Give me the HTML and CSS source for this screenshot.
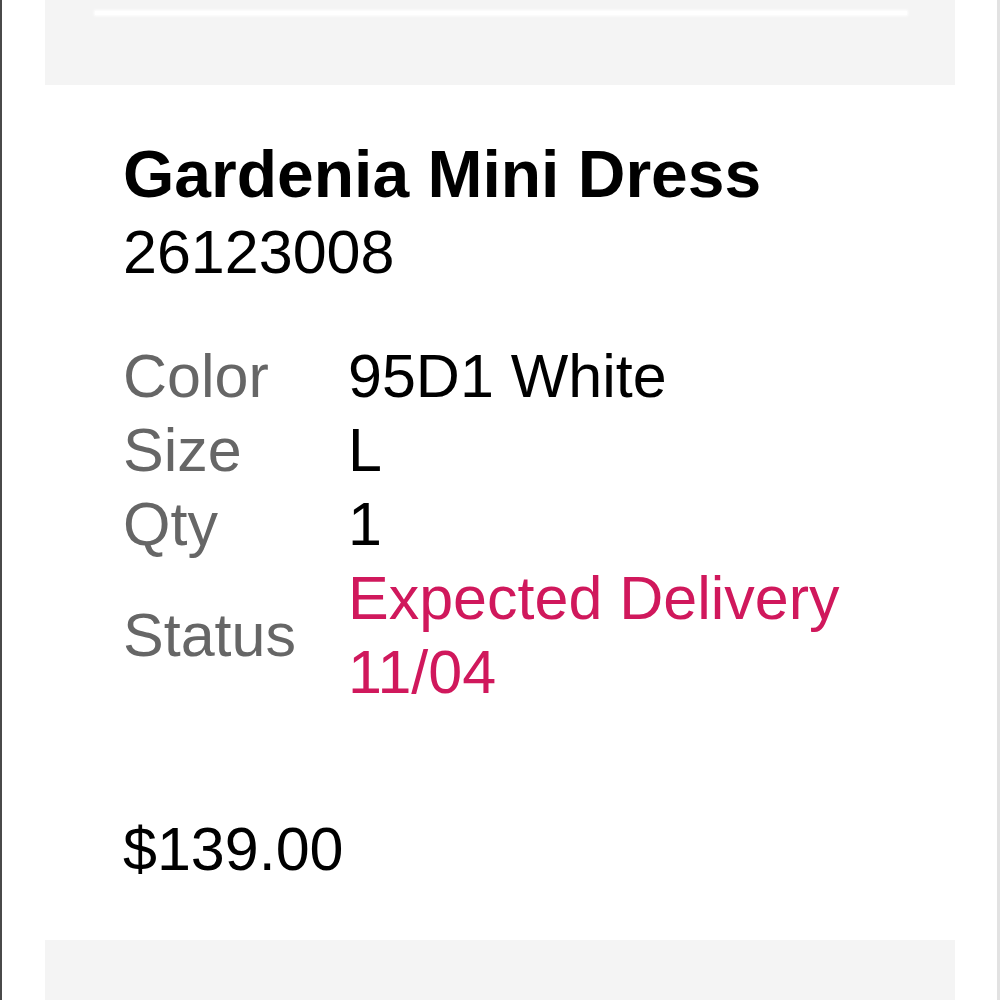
FILE: index.html
```html
<!DOCTYPE html>
<html lang="en">
<head>
<meta charset="utf-8">
<title>Gardenia Mini Dress</title>
<link rel="stylesheet" href="styles.css">
</head>
<body>
<div class="screen">
  <div class="panel panel-top">
    <div class="divider"></div>
  </div>
  <div class="item">
    <h1 class="item-name">Gardenia Mini Dress</h1>
    <div class="item-sku">26123008</div>
    <dl class="details">
      <dt class="label">Color</dt>
      <dd class="value">95D1 White</dd>
      <dt class="label">Size</dt>
      <dd class="value">L</dd>
      <dt class="label">Qty</dt>
      <dd class="value">1</dd>
      <dt class="label">Status</dt>
      <dd class="value status">Expected Delivery 11/04</dd>
    </dl>
    <div class="price">$139.00</div>
  </div>
  <div class="panel panel-bottom"></div>
</div>
</body>
</html>
```

FILE: styles.css
```css
html, body {
  margin: 0;
  padding: 0;
  background: #ffffff;
}

body {
  font-family: "Liberation Sans", Arial, Helvetica, sans-serif;
  color: #000000;
}

.screen {
  box-sizing: border-box;
  width: 1000px;
  height: 1000px;
  overflow: hidden;
  border-left: 2px solid #4a4a4a;
  border-right: 3px solid #e2e2e2;
  display: flex;
  flex-direction: column;
}

.panel {
  margin-left: 43px;
  width: 910px;
  background: #f4f4f4;
}

.panel-top {
  height: 85px;
  padding-top: 11px;
  box-sizing: border-box;
}

.divider {
  margin: 0 48px 0 50px;
  height: 4px;
  background: #ffffff;
  box-shadow: 0 0 3px 1px #ffffff;
}

.panel-bottom {
  flex: 1;
}

.item {
  margin-left: 43px;
  width: 910px;
  box-sizing: border-box;
  padding: 51px 78px 54px 78px;
}

.item-name {
  margin: 0;
  font-size: 66px;
  line-height: 76px;
  font-weight: bold;
}

.item-sku {
  margin-top: 3px;
  font-size: 61px;
  line-height: 74px;
}

.details {
  margin: 50px 0 0 0;
  display: grid;
  grid-template-columns: 225px 1fr;
  align-items: center;
  font-size: 61px;
  line-height: 74px;
}

.label {
  margin: 0;
  color: #666666;
}

.value {
  margin: 0;
  color: #000000;
}

.status {
  color: #d0185c;
}

.price {
  margin-top: 103px;
  font-size: 61px;
  line-height: 74px;
}
```
